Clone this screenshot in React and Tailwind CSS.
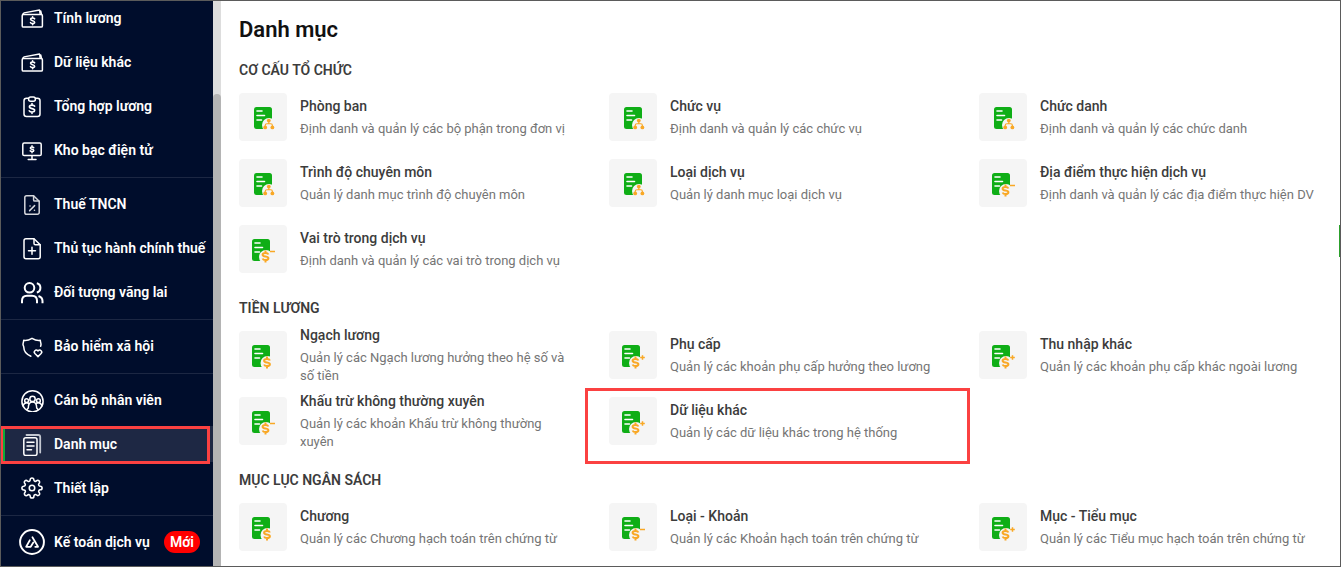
import { FiSettings } from 'react-icons/fi'

// ─── Sidebar icons ─────────────────────────────────────────────────────────────
function Icon({ children, width = 1.5, className = 'size-6' }) {
  return (
    <svg className={className} viewBox="0 0 24 24" fill="none" stroke="currentColor"
         strokeWidth={width} strokeLinecap="round" strokeLinejoin="round" aria-hidden="true">
      {children}
    </svg>
  )
}

const WalletIcon = () => (
  <Icon>
    <rect x="2.2" y="8.5" width="20.2" height="12.6" rx="1.2" />
    <path d="M2.6 8.2 4 6.900l15.500-2.900.6 4.300M19.400 4.800h1.400l.8 3.500" strokeWidth="1.3" />
    <path d="M14.600 12.800c-.4-.6-1.200-.8-2-.8-1.100 0-2 .5-2 1.300 0 1.900 4 .9 4 2.900 0 .8-.9 1.300-2 1.300-.9 0-1.700-.3-2.100-.9M12.600 10.800v1.200M12.600 17.500v1.200" strokeWidth="1.600" />
  </Icon>
)

const ClipboardIcon = () => (
  <Icon>
    <path d="M8.500 4.200H6.500a2.500 2.500 0 0 0-2.500 2.500v13.300a2.500 2.500 0 0 0 2.500 2.500h11a2.500 2.500 0 0 0 2.500-2.500V6.700a2.500 2.500 0 0 0-2.500-2.500h-2" />
    <path d="M8.600 5.200c0-1.400.8-2.200 2-2.200h2.800c1.200 0 2 .8 2 2.200s-.8 2-2 2h-2.800c-1.200 0-2-.600-2-2Z" />
    <path d="M14.600 12.200c-.4-.8-1.400-1.100-2.600-1.100-1.500 0-2.600.7-2.600 1.700 0 2.600 5.200 1 5.200 3.500 0 1-1.100 1.700-2.600 1.700-1.200 0-2.200-.4-2.700-1.200M12 9.600v1.400M12 18.100v1.400" strokeWidth="1.600" />
  </Icon>
)

const MonitorIcon = () => (
  <Icon>
    <rect x="2.800" y="5" width="18.400" height="12.600" rx="1.400" />
    <path d="M12 18v3.300M8.200 21.400h7.800" />
    <path d="M13.700 9.600c-.4-.4-1-.6-1.700-.6-1 0-1.700.4-1.700 1.100 0 1.600 3.500.7 3.500 2.300 0 .7-.8 1.100-1.800 1.100-.7 0-1.400-.2-1.800-.6M12 7.800V9M12 13.600v1.200" strokeWidth="1.500" />
  </Icon>
)

const FilePercentIcon = () => (
  <Icon>
    <g stroke="#d5d7dc">
      <path d="M13.600 3.700H6.600A1.800 1.800 0 0 0 4.800 5.500v15a1.800 1.800 0 0 0 1.800 1.800h10.800a1.800 1.800 0 0 0 1.800-1.800V9.200Z" />
      <path d="M13.600 3.900v4a1.200 1.200 0 0 0 1.200 1.200h4.200" />
      <path d="m14.600 13.600-5 5M10 14h.1M14.400 18.200h.1" />
    </g>
  </Icon>
)

const FilePlusIcon = () => (
  <Icon>
    <path d="M14 2.800H6A2 2 0 0 0 4 4.800v16a2 2 0 0 0 2 2h12.200a2 2 0 0 0 2-2V8.800Z" />
    <path d="M14 3v4.400A1.400 1.400 0 0 0 15.400 8.800h4.600M12 11.200v7M8.500 14.700h7" />
  </Icon>
)

const UsersIcon = () => (
  <Icon width={2}>
    <circle cx="9.500" cy="7.800" r="4.800" />
    <path d="M2 23.200v-2.400c0-3 2-5 5-5h5c3 0 5 2 5 5v2.400M16.800 3.200c4.800 1 4.800 8.200 0 9.200M18.500 16c2.600.8 4 2.600 4 5v2.200" strokeLinecap="butt" />
  </Icon>
)

const ShieldHeartIcon = () => (
  <Icon>
    <path d="M10.900 22.200C6.500 20.400 3.800 17.400 3.800 13.300c0-1.200-.8-1.800-.8-2.900 0-1.500.7-2.600.7-4.100 3.300.500 5.800-.5 8.300-2 2.500 1.500 5 2.500 8.300 2 0 1.500.7 2.600.7 4.100 0 .7-.2 1.200-.4 1.800" />
    <path d="m18 22.600-3.100-3.100c-1.800-1.900.8-4.700 3.100-2.600 2.300-2.100 4.900.7 3.100 2.600Z" />
  </Icon>
)

const StaffIcon = () => (
  <Icon width={1.500}>
    <circle cx="12.500" cy="13.300" r="10.600" />
    <circle cx="12.500" cy="10.900" r="2.700" />
    <circle cx="6.600" cy="12.700" r="1.900" />
    <circle cx="18.400" cy="12.700" r="1.900" />
    <path d="M8.300 20c0-3.800 1.500-6 4.200-6s4.200 2.200 4.200 6M3 17.800c.7-2 2-3 3.600-3 1 0 1.800.4 2.500 1.200M22 17.800c-.7-2-2-3-3.600-3-1 0-1.800.4-2.500 1.200M8.300 20 7 21.500M16.700 20l1.300 1.500" />
  </Icon>
)

const DocumentsIcon = () => (
  <Icon>
    <rect x="3.800" y="5.800" width="13.200" height="17.600" rx="2" />
    <path d="M6.500 3h11.700a2 2 0 0 1 2 2v15.500" stroke="#c3c7d0" strokeWidth="1.800" />
    <path d="M7 10.200h7M7 14h7M7 17.800h4.500" />
  </Icon>
)

const GearIcon = () => <FiSettings size={22} strokeWidth={1.700} />

const LogoIcon = () => (
  <Icon width={1.800} className="size-[26px]">
    <circle cx="12" cy="12" r="11" />
    <path d="M10 10.400 6.600 16.400h4.200l2.400-4M12.400 7.600l5.200 8.800h-2.600" strokeWidth="1.600" />
  </Icon>
)

// ─── Tile icons ────────────────────────────────────────────────────────────────
function Dollar({ cx }) {
  return (
    <g transform={`translate(${cx} 31.500)`} fill="none" stroke="#f9a825" strokeWidth="2">
      <path d="M2.900-2c-.4-1.100-1.500-1.600-2.900-1.600-1.700 0-2.900.7-2.900 1.800C-2.900.9 2.900-.9 2.900 1.800c0 1.100-1.200 1.800-2.900 1.800-1.400 0-2.500-.5-2.900-1.600M0-6v2.400M0 3.600v2.400" />
    </g>
  )
}

function TileIcon({ kind }) {
  const x = kind === 'org' ? 15 : 13
  return (
    <svg className="size-12" viewBox="0 0 48 48" aria-hidden="true">
      <rect x={x} y="14" width="18" height="22" rx="2.500" fill="#0fae16" />
      <path d={`M${x + 3} 18h5M${x + 3} 22.500h7.500M${x + 3} 27h4.500`} stroke="#fff" strokeWidth="1.600" strokeLinecap="round" />
      <circle cx={kind === 'org' ? 30 : kind === 'dollar' ? 28.500 : 27} cy="32" r="7" fill="#f5f5f5" />
      {kind === 'org' ? (
        <g fill="#f9a825">
          <circle cx="29.800" cy="27.600" r="1.900" />
          <circle cx="26.200" cy="34.400" r="1.900" />
          <circle cx="33.400" cy="34.400" r="1.900" />
          <path d="M29.800 28v2.600M26.200 34v-1.600q0-1.700 1.700-1.700h3.800q1.700 0 1.700 1.700V34" fill="none" stroke="#f9a825" strokeWidth="1.100" />
        </g>
      ) : <Dollar cx={kind === 'dollar' ? 28 : 26.500} />}
      {kind === 'plus' && <path d="M31.200 26.500h4.600M33.500 24.200v4.600" stroke="#f9a825" strokeWidth="1.500" />}
      {kind === 'minus' && <path d="M31 26.500h5" stroke="#f9a825" strokeWidth="1.500" />}
    </svg>
  )
}

// ─── Data ──────────────────────────────────────────────────────────────────────
const NAV_GROUPS = [
  [
    { label: 'Tính lương', icon: WalletIcon },
    { label: 'Dữ liệu khác', icon: WalletIcon },
    { label: 'Tổng hợp lương', icon: ClipboardIcon },
    { label: 'Kho bạc điện tử', icon: MonitorIcon },
  ],
  [
    { label: 'Thuế TNCN', icon: FilePercentIcon },
    { label: 'Thủ tục hành chính thuế', icon: FilePlusIcon },
    { label: 'Đối tượng vãng lai', icon: UsersIcon },
  ],
  [{ label: 'Bảo hiểm xã hội', icon: ShieldHeartIcon }],
  [
    { label: 'Cán bộ nhân viên', icon: StaffIcon },
    { label: 'Danh mục', icon: DocumentsIcon, active: true },
    { label: 'Thiết lập', icon: GearIcon },
  ],
  [{ label: 'Kế toán dịch vụ', icon: LogoIcon, badge: 'Mới' }],
]

const SECTIONS = [
  {
    title: 'CƠ CẤU TỔ CHỨC',
    items: [
      { title: 'Phòng ban', desc: 'Định danh và quản lý các bộ phận trong đơn vị', kind: 'org' },
      { title: 'Chức vụ', desc: 'Định danh và quản lý các chức vụ', kind: 'org' },
      { title: 'Chức danh', desc: 'Định danh và quản lý các chức danh', kind: 'org' },
      { title: 'Trình độ chuyên môn', desc: 'Quản lý danh mục trình độ chuyên môn', kind: 'org' },
      { title: 'Loại dịch vụ', desc: 'Quản lý danh mục loại dịch vụ', kind: 'org' },
      { title: 'Địa điểm thực hiện dịch vụ', desc: 'Định danh và quản lý các địa điểm thực hiện DV', kind: 'minus' },
      { title: 'Vai trò trong dịch vụ', desc: 'Định danh và quản lý các vai trò trong dịch vụ', kind: 'minus' },
    ],
  },
  {
    title: 'TIỀN LƯƠNG',
    items: [
      { title: 'Ngạch lương', desc: 'Quản lý các Ngạch lương hưởng theo hệ số và số tiền', kind: 'dollar' },
      { title: 'Phụ cấp', desc: 'Quản lý các khoản phụ cấp hưởng theo lương', kind: 'plus' },
      { title: 'Thu nhập khác', desc: 'Quản lý các khoản phụ cấp khác ngoài lương', kind: 'plus' },
      { title: 'Khấu trừ không thường xuyên', desc: 'Quản lý các khoản Khấu trừ không thường xuyên', kind: 'minus' },
      { title: 'Dữ liệu khác', desc: 'Quản lý các dữ liệu khác trong hệ thống', kind: 'plus', marked: true },
    ],
  },
  {
    title: 'MỤC LỤC NGÂN SÁCH',
    items: [
      { title: 'Chương', desc: 'Quản lý các Chương hạch toán trên chứng từ', kind: 'dollar' },
      { title: 'Loại - Khoản', desc: 'Quản lý các Khoản hạch toán trên chứng từ', kind: 'minus' },
      { title: 'Mục - Tiểu mục', desc: 'Quản lý các Tiểu mục hạch toán trên chứng từ', kind: 'plus' },
    ],
  },
]

// ─── Sidebar ───────────────────────────────────────────────────────────────────
function NavItem({ label, icon: ItemIcon, active, badge }) {
  return (
    <li className="relative">
      <a href="#" aria-current={active ? 'page' : undefined}
         className={`flex h-9 items-center border-l-[5px] pl-[13px] text-sm font-semibold whitespace-nowrap text-white ${active ? 'border-[#0bab3a] bg-[#1e2844]' : 'border-transparent'}`}>
        <span className="mr-2 flex w-7 shrink-0 justify-center"><ItemIcon /></span>
        {label}
        {badge && <span className="ml-3.5 rounded-full bg-[#ff0000] px-1.5 leading-[22px]">{badge}</span>}
      </a>
      {active && <div className="pointer-events-none absolute top-0 right-[3px] -bottom-0.5 left-0 border-3 border-[#fb4141]" />}
    </li>
  )
}

function Sidebar() {
  return (
    <aside className="flex shrink-0">
      <nav className="w-[213px] overflow-hidden bg-[#000d2c]">
        {NAV_GROUPS.map((group, i) => (
          <ul key={i} className={`flex flex-col gap-2 ${i > 0 ? 'mt-[9px] border-t border-[#1c2743] pt-2' : ''}`}>
            {group.map(item => <NavItem key={item.label} {...item} />)}
          </ul>
        ))}
      </nav>
      {/* Scroll track */}
      <div className="flex w-2 flex-col bg-[#dddddd] pt-[94px]">
        <div className="flex-1 rounded-t bg-[#b4b4b4]" />
      </div>
    </aside>
  )
}

// ─── Catalogue ─────────────────────────────────────────────────────────────────
function CatalogItem({ title, desc, kind, marked }) {
  return (
    <li className="relative">
      <a href="#" className="flex h-[66px] items-center">
        <span className="mr-[13px] shrink-0 rounded bg-[#f5f5f5]"><TileIcon kind={kind} /></span>
        <span className="flex flex-col gap-1">
          <span className="text-sm leading-5 font-medium text-[#3c3c3c]">{title}</span>
          <span className="text-[13px] leading-[18px] text-[#757575]">{desc}</span>
        </span>
      </a>
      {marked && <div className="pointer-events-none absolute top-0 -right-[23px] -bottom-2.5 -left-6 border-3 border-[#fb4141]" />}
    </li>
  )
}

export default function App() {
  return (
    <div className="relative flex h-screen overflow-hidden bg-white font-['Roboto',sans-serif]">
      <Sidebar />
      <main className="min-w-0 flex-1 overflow-hidden pt-4 pr-6 pl-[18px]">
        <h1 className="text-[22px] leading-7 font-semibold text-[#111111]">Danh mục</h1>
        {SECTIONS.map(section => (
          <section key={section.title} className="mt-4">
            <h2 className="mb-1 text-sm leading-5 font-semibold text-[#3c3c3c]">{section.title}</h2>
            <ul className="grid grid-cols-3 gap-x-8">
              {section.items.map(item => <CatalogItem key={item.title} {...item} />)}
            </ul>
          </section>
        ))}
      </main>
      {/* Edge handle and window frame */}
      <div className="absolute top-[225px] right-0 h-8 w-0.5 bg-[#2ca02c]" />
      <div className="pointer-events-none absolute inset-0 border border-[#5b5b5b]" />
    </div>
  )
}
